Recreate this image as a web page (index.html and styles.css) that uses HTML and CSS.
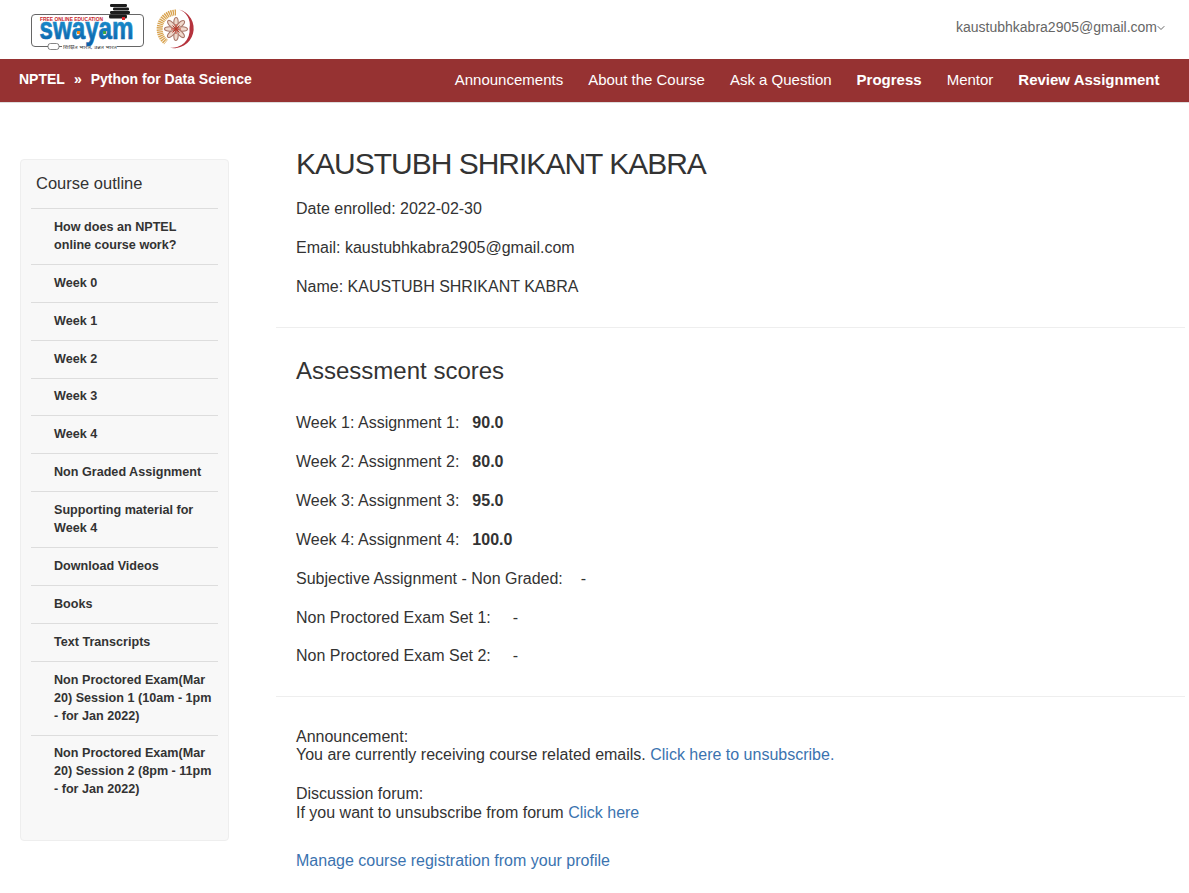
FILE: index.html
```html
<!DOCTYPE html>
<html lang="en">
<head>
<meta charset="utf-8">
<title>Progress</title>
<link rel="stylesheet" href="styles.css">
</head>
<body>
<header class="topbar">
  <div class="logos">
    <svg class="logo-swayam" width="116" height="52" viewBox="0 0 116 52">
      <defs>
        <linearGradient id="wordfill" x1="0" y1="0" x2="0" y2="1">
          <stop offset="0" stop-color="#1f9bd7"/>
          <stop offset="1" stop-color="#0a5fa8"/>
        </linearGradient>
      </defs>
      <rect x="1.5" y="14.5" width="112" height="32" rx="3.5" fill="#fff" stroke="#666" stroke-width="1"/>
      <rect x="32" y="43" width="55" height="7" fill="#fff"/>
      <g fill="#1c1c1c">
        <rect x="80" y="4" width="17" height="3" rx="1.2"/>
        <rect x="83" y="7.5" width="16" height="3" rx="1.2"/>
        <rect x="80" y="11" width="20" height="3" rx="1.2"/>
        <rect x="79" y="14.5" width="18" height="4" rx="1.5"/>
      </g>
      <rect x="92" y="17" width="3" height="3" fill="#d8272d"/>
      <text x="10" y="20.5" class="logo-tag" textLength="63" lengthAdjust="spacingAndGlyphs">FREE ONLINE EDUCATION</text>
      <text x="9.5" y="39" class="logo-word" fill="url(#wordfill)" stroke="url(#wordfill)" textLength="94" lengthAdjust="spacingAndGlyphs">swayam</text>
      <rect x="47" y="31" width="3" height="3" fill="#ef8a1d"/>
      <rect x="73" y="31" width="3" height="3" fill="#3aa648"/>
      <rect x="18" y="43.5" width="11" height="6" rx="2.5" fill="#fff" stroke="#666" stroke-width=".8"/>
      <text x="33" y="48.5" class="logo-sub" textLength="54" lengthAdjust="spacingAndGlyphs">शिक्षित भारत, उन्नत भारत</text>
    </svg>
    <svg class="logo-seal" width="40" height="40" viewBox="0 0 40 40">
      <path d="M20 3.5 A16.5 16.5 0 0 0 10 33" fill="none" stroke="#d8a24e" stroke-width="6" stroke-dasharray="1.3 .7"/>
      <path d="M23 .5 A19.5 19.5 0 0 1 13 38.5 A17.5 17.5 0 0 0 33.5 19 A16 16 0 0 0 23 .5Z" fill="#b5323c"/>
      <g fill="#efd9cc" stroke="#a9786a" stroke-width="1.1">
        <ellipse cx="20" cy="13.5" rx="2.2" ry="5"/>
        <ellipse cx="20" cy="13.5" rx="2.2" ry="5" transform="rotate(45 20 20)"/>
        <ellipse cx="20" cy="13.5" rx="2.2" ry="5" transform="rotate(90 20 20)"/>
        <ellipse cx="20" cy="13.5" rx="2.2" ry="5" transform="rotate(135 20 20)"/>
        <ellipse cx="20" cy="13.5" rx="2.2" ry="5" transform="rotate(180 20 20)"/>
        <ellipse cx="20" cy="13.5" rx="2.2" ry="5" transform="rotate(225 20 20)"/>
        <ellipse cx="20" cy="13.5" rx="2.2" ry="5" transform="rotate(270 20 20)"/>
        <ellipse cx="20" cy="13.5" rx="2.2" ry="5" transform="rotate(315 20 20)"/>
      </g>
      <path d="M15 20H25M20 15V25M16.5 16.5 23.5 23.5M23.5 16.5 16.5 23.5" stroke="#c0392b" stroke-width="1" fill="none"/>
    </svg>
  </div>
  <div class="account">
    <span>kaustubhkabra2905@gmail.com</span>
    <svg class="chevron" width="8" height="6" viewBox="0 0 8 6"><path d="M.7 1.2 4 4.5l3.3-3.3" fill="none" stroke="#666" stroke-width="1"/></svg>
  </div>
</header>

<nav class="navbar">
  <div class="crumbs">
    <a>NPTEL</a><span class="sep">»</span><a>Python for Data Science</a>
  </div>
  <ul class="menu">
    <li>Announcements</li>
    <li>About the Course</li>
    <li>Ask a Question</li>
    <li class="strong">Progress</li>
    <li>Mentor</li>
    <li class="strong">Review Assignment</li>
  </ul>
</nav>

<div class="page">
  <aside class="outline">
    <h2 class="outline-title">Course outline</h2>
    <ul class="outline-list">
      <li>How does an NPTEL online course work?</li>
      <li>Week 0</li>
      <li>Week 1</li>
      <li>Week 2</li>
      <li>Week 3</li>
      <li>Week 4</li>
      <li>Non Graded Assignment</li>
      <li>Supporting material for Week 4</li>
      <li>Download Videos</li>
      <li>Books</li>
      <li>Text Transcripts</li>
      <li>Non Proctored Exam(Mar 20) Session 1 (10am - 1pm - for Jan 2022)</li>
      <li>Non Proctored Exam(Mar 20) Session 2 (8pm - 11pm - for Jan 2022)</li>
    </ul>
  </aside>

  <main class="content">
    <section class="block profile">
      <h1>KAUSTUBH SHRIKANT KABRA</h1>
      <p>Date enrolled: 2022-02-30</p>
      <p>Email: kaustubhkabra2905@gmail.com</p>
      <p>Name: KAUSTUBH SHRIKANT KABRA</p>
    </section>
    <section class="block scores">
      <h2>Assessment scores</h2>
      <p>Week 1: Assignment 1:<b>90.0</b></p>
      <p>Week 2: Assignment 2:<b>80.0</b></p>
      <p>Week 3: Assignment 3:<b>95.0</b></p>
      <p>Week 4: Assignment 4:<b>100.0</b></p>
      <p>Subjective Assignment - Non Graded:<span class="none">-</span></p>
      <p>Non Proctored Exam Set 1:<span class="none wide">-</span></p>
      <p>Non Proctored Exam Set 2:<span class="none wide">-</span></p>
    </section>
    <section class="notes">
      <p class="note">Announcement:<br>You are currently receiving course related emails. <a href="#">Click here to unsubscribe.</a></p>
      <p class="note">Discussion forum:<br>If you want to unsubscribe from forum <a href="#">Click here</a></p>
      <p class="manage"><a href="#">Manage course registration from your profile</a></p>
    </section>
  </main>
</div>
</body>
</html>
```
FILE: styles.css
```css
* { box-sizing: border-box; }
html, body { margin: 0; padding: 0; }
body {
  font-family: "Liberation Sans", Arial, sans-serif;
  font-size: 16px;
  line-height: 1.42857;
  color: #333;
  background: #fff;
  height: 893px;
  overflow: hidden;
}
a { color: #3b73af; text-decoration: none; }

.topbar {
  height: 59px;
  display: flex;
  justify-content: space-between;
  padding: 0 24px 0 30px;
}
.logos { display: flex; align-items: flex-start; gap: 10px; }
.logo-swayam { display: block; overflow: visible; }
.logo-seal { margin-top: 9px; display: block; overflow: visible; }
.logo-tag { font: bold 6px "Liberation Sans", sans-serif; fill: #c8232c; }
.logo-word { font: bold 31px "Liberation Sans", sans-serif; stroke-width: .7px; }
.logo-sub { font: 4.5px "Noto Sans", sans-serif; fill: #444; }
.account {
  display: flex;
  align-items: center;
  height: 55px;
  font-size: 14px;
  color: #666;
}
.chevron { margin-left: 0; margin-top: 1px; }

.navbar {
  height: 44px;
  background: #963232;
  border-bottom: 1px solid #ddd;
  color: #fff;
  display: flex;
  justify-content: space-between;
  align-items: center;
  padding: 0 17px 0 19px;
}
.crumbs { font-size: 14px; font-weight: bold; display: flex; margin-top: -2px; }
.crumbs a { color: #fff; }
.sep { margin: 0 9px; }
.menu {
  list-style: none;
  margin: -2px 0 0;
  padding: 0;
  display: flex;
  font-size: 15px;
}
.menu li { padding: 0 12.5px; }
.menu .strong { font-weight: bold; }

.page {
  display: flex;
  align-items: flex-start;
  padding: 56px 4px 0 20px;
}

.outline {
  width: 209px;
  height: 682px;
  flex: none;
  background: #f8f8f8;
  border: 1px solid #eee;
  border-radius: 4px;
  padding: 0 10px;
}
.outline-title {
  margin: 0;
  padding: 13px 5px 15px;
  font-size: 16.5px;
  font-weight: normal;
  line-height: 20px;
}
.outline-list { list-style: none; margin: 0; padding: 0; }
.outline-list li {
  border-top: 1px solid #ddd;
  padding: 8.9px 5px 9.99px 23px;
  font-size: 12.6px;
  font-weight: bold;
  line-height: 18px;
}

.content { flex: 1; margin-left: 47px; }
.block { border-bottom: 1px solid #eee; padding: 0 20px; }
.block p, .notes p { margin: 0 0 16px; }
.profile { height: 169px; display: flow-root; }
.profile h1 {
  margin: -12px 0 17px;
  font-size: 30px;
  letter-spacing: -1px;
  font-weight: normal;
  line-height: 34px;
}
.scores { height: 369px; padding-top: 30px; }
.scores h2 {
  margin: 0 0 28.35px;
  font-size: 24px;
  font-weight: normal;
  line-height: 26px;
}
.scores b { margin-left: 13px; }
.scores .none { margin-left: 18px; }
.scores .wide { margin-left: 22px; }
.notes { padding: 30.8px 20px 0; }
.notes .note { line-height: 18.4px; margin-bottom: 20.7px; }
.notes .manage { margin-top: 28px; }
```
